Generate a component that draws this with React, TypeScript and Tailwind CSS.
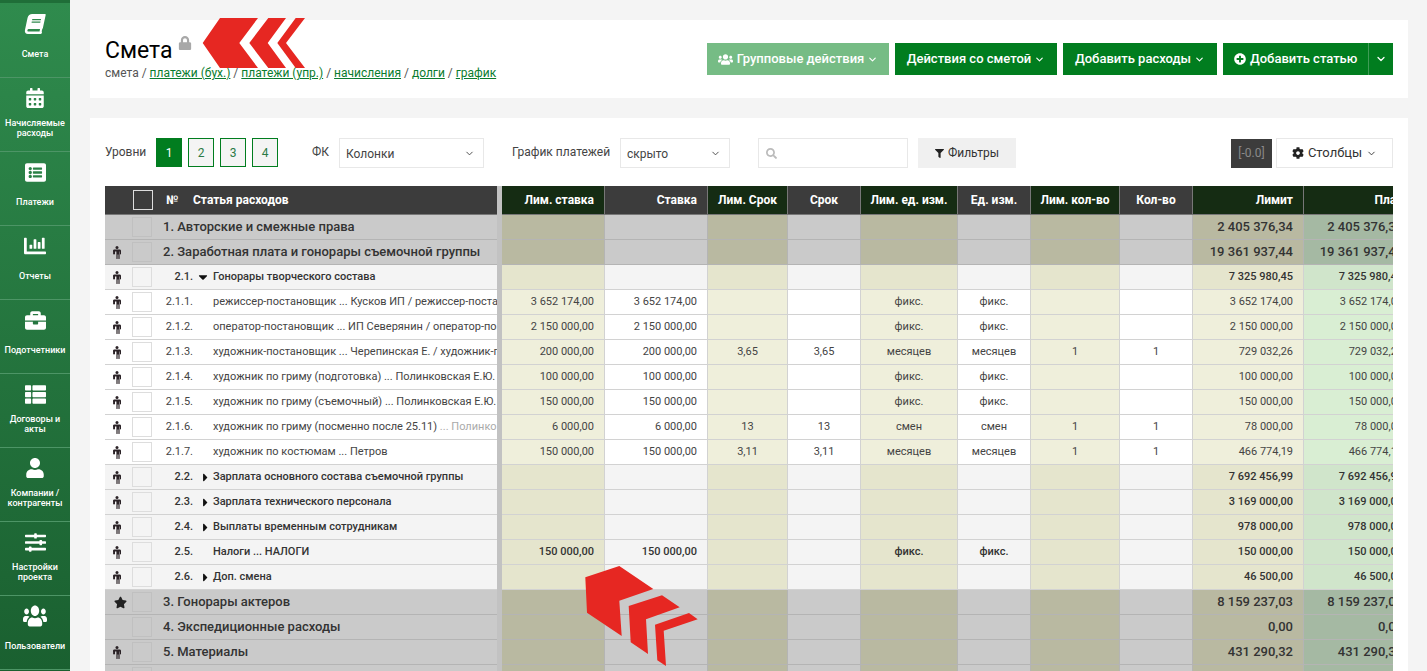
import {
  FaBook,
  FaBriefcase,
  FaCalendarAlt,
  FaChartBar,
  FaCog,
  FaFilter,
  FaListAlt,
  FaLock,
  FaPlusCircle,
  FaSearch,
  FaSlidersH,
  FaStar,
  FaThList,
  FaUser,
  FaUsers,
  FaCaretDown,
  FaCaretRight,
} from 'react-icons/fa';
import { ChevronDown } from 'lucide-react';
import type { ReactNode } from 'react';

const navItems: { icon: ReactNode; label: ReactNode }[] = [
  { icon: <FaBook className="text-[20px] -skew-x-12" />, label: 'Смета' },
  { icon: <FaCalendarAlt className="text-[20px]" />, label: <>Начисляемые<br />расходы</> },
  { icon: <FaListAlt className="text-[21px]" />, label: 'Платежи' },
  { icon: <FaChartBar className="text-[22px]" />, label: 'Отчеты' },
  { icon: <FaBriefcase className="text-[21px]" />, label: 'Подотчетники' },
  { icon: <FaThList className="text-[21px]" />, label: <>Договоры и<br />акты</> },
  { icon: <FaUser className="text-[20px]" />, label: <>Компании /<br />контрагенты</> },
  { icon: <FaSlidersH className="text-[21px]" />, label: <>Настройки<br />проекта</> },
  { icon: <FaUsers className="scale-y-125 text-[24px]" />, label: 'Пользователи' },
];

type Kind = 'group' | 'sub' | 'leaf';

interface Row {
  kind: Kind;
  num?: string;
  label?: ReactNode;
  mark?: 'male' | 'star';
  caret?: 'down' | 'right';
  cells?: string[];
}

const fix = (a: string, lim: string) => [a, a, '', '', 'фикс.', 'фикс.', '', '', lim, lim];
const mon = (a: string, n: string, unit: string, k: string, lim: string) => [a, a, n, n, unit, unit, k, k, lim, lim];
const empty = (lim: string) => ['', '', '', '', '', '', '', '', lim, lim];

const rows: Row[] = [
  { kind: 'group', label: '1. Авторские и смежные права', cells: empty('2 405 376,34') },
  { kind: 'group', mark: 'male', label: '2. Заработная плата и гонорары съемочной группы', cells: empty('19 361 937,44') },
  { kind: 'sub', mark: 'male', num: '2.1.', caret: 'down', label: 'Гонорары творческого состава', cells: empty('7 325 980,45') },
  { kind: 'leaf', mark: 'male', num: '2.1.1.', label: 'режиссер-постановщик ... Кусков ИП / режиссер-поста', cells: fix('3 652 174,00', '3 652 174,00') },
  { kind: 'leaf', mark: 'male', num: '2.1.2.', label: 'оператор-постановщик ... ИП Северянин / оператор-по', cells: fix('2 150 000,00', '2 150 000,00') },
  { kind: 'leaf', mark: 'male', num: '2.1.3.', label: 'художник-постановщик ... Черепинская Е. / художник-п', cells: mon('200 000,00', '3,65', 'месяцев', '1', '729 032,26') },
  { kind: 'leaf', mark: 'male', num: '2.1.4.', label: 'художник по гриму (подготовка) ... Полинковская Е.Ю.', cells: fix('100 000,00', '100 000,00') },
  { kind: 'leaf', mark: 'male', num: '2.1.5.', label: 'художник по гриму (съемочный) ... Полинковская Е.Ю.', cells: fix('150 000,00', '150 000,00') },
  {
    kind: 'leaf',
    mark: 'male',
    num: '2.1.6.',
    label: <>художник по гриму (посменно после 25.11) <span className="text-[#aaaaaa]">... Полинко</span></>,
    cells: mon('6 000,00', '13', 'смен', '1', '78 000,00'),
  },
  { kind: 'leaf', mark: 'male', num: '2.1.7.', label: 'художник по костюмам ... Петров', cells: mon('150 000,00', '3,11', 'месяцев', '1', '466 774,19') },
  { kind: 'sub', mark: 'male', num: '2.2.', caret: 'right', label: 'Зарплата основного состава съемочной группы', cells: empty('7 692 456,99') },
  { kind: 'sub', mark: 'male', num: '2.3.', caret: 'right', label: 'Зарплата технического персонала', cells: empty('3 169 000,00') },
  { kind: 'sub', mark: 'male', num: '2.4.', caret: 'right', label: 'Выплаты временным сотрудникам', cells: empty('978 000,00') },
  { kind: 'sub', mark: 'male', num: '2.5.', label: 'Налоги ... НАЛОГИ', cells: ['150 000,00', '150 000,00', '', '', 'фикс.', 'фикс.', '', '', '150 000,00', '150 000,00'] },
  { kind: 'sub', mark: 'male', num: '2.6.', caret: 'right', label: 'Доп. смена', cells: empty('46 500,00') },
  { kind: 'group', mark: 'star', label: '3. Гонорары актеров', cells: empty('8 159 237,03') },
  { kind: 'group', label: '4. Экспедиционные расходы', cells: empty('0,00') },
  { kind: 'group', mark: 'male', label: '5. Материалы', cells: empty('431 290,32') },
  { kind: 'group', cells: empty('') },
];

const columns = [
  { title: 'Лим. ставка', tone: 'lim', align: 'right', width: 'w-[103px]' },
  { title: 'Ставка', tone: 'base', align: 'right', width: 'w-[103px]' },
  { title: 'Лим. Срок', tone: 'lim', align: 'center', width: 'w-[80px]' },
  { title: 'Срок', tone: 'base', align: 'center', width: 'w-[73px]' },
  { title: 'Лим. ед. изм.', tone: 'lim', align: 'center', width: 'w-[97px]' },
  { title: 'Ед. изм.', tone: 'base', align: 'center', width: 'w-[73px]' },
  { title: 'Лим. кол-во', tone: 'lim', align: 'center', width: 'w-[89px]' },
  { title: 'Кол-во', tone: 'base', align: 'center', width: 'w-[73px]' },
  { title: 'Лимит', tone: 'lim', align: 'right', width: 'w-[111px]' },
  { title: 'План', tone: 'plan', align: 'right', width: 'w-[110px]' },
] as const;

const kindStyles = {
  group: {
    base: 'bg-[#cacaca]',
    lim: 'bg-[#b9b9a1]',
    plan: 'bg-[#a5b9a3]',
    line: 'border-[#b4b4b4]',
    text: 'text-[13px] font-medium text-[#333333]',
    box: 'border-[#c0c0c0]',
  },
  sub: {
    base: 'bg-[#f4f4f4]',
    lim: 'bg-[#e5e5cd]',
    plan: 'bg-[#d0e5cb]',
    line: 'border-[#d2d2d2]',
    text: 'text-[11px] font-medium text-[#333333]',
    box: 'border-[#dddddd]',
  },
  leaf: {
    base: 'bg-white',
    lim: 'bg-[#efefdb]',
    plan: 'bg-[#d9eed3]',
    line: 'border-[#d2d2d2]',
    text: 'text-[11px] text-[#444444]',
    box: 'border-[#dddddd] bg-white',
  },
};

function MaleIcon() {
  return (
    <svg viewBox="0 0 8 13" className="h-[13px] w-2 fill-[#2a2226]">
      <circle cx="4" cy="1.5" r="1.5" />
      <path d="M1.4 3.4h5.2c.8 0 1.4.6 1.4 1.4V8c0 .3-.2.5-.5.5S7 8.3 7 8V5.4h-.4v7c0 .3-.3.6-.6.6s-.6-.3-.6-.6V8.6h-.8v3.8c0 .3-.3.6-.6.6s-.6-.3-.6-.6v-7H2V8c0 .3-.2.5-.5.5S1 8.3 1 8V5.4H.9V8c0 .3-.2.5-.45.5S0 8.3 0 8V4.8c0-.8.6-1.4 1.4-1.4z" />
    </svg>
  );
}

function Btn({ children, light, width }: { children: ReactNode; light?: boolean; width: string }) {
  return (
    <button
      type="button"
      className={
        'flex h-8 items-center justify-center gap-[3px] text-[13px] font-medium text-white ' +
        width + ' ' +
        (light ? 'bg-[#76bc85]' : 'bg-[#017d1f]')
      }
    >
      {children}
    </button>
  );
}

function Select({ value, width }: { value: string; width: string }) {
  return (
    <div className={'flex h-[30px] items-center justify-between border border-[#e8e8e8] bg-white pl-[6px] pr-[8px] pt-px text-[12px] text-[#444444] ' + width}>
      <span>{value}</span>
      <ChevronDown size={11} strokeWidth={2} />
    </div>
  );
}

function Levels() {
  return (
    <div className="flex gap-[6px] self-start">
      {['1', '2', '3', '4'].map((n) => (
        <div
          key={n}
          className={
            'flex h-[29px] w-[26px] items-center justify-center border border-[#017d1f] text-[12px] ' +
            (n === '1' ? 'bg-[#017d1f] text-white' : 'bg-[#f4f4f4] text-[#2a7a45]')
          }
        >
          {n}
        </div>
      ))}
    </div>
  );
}

function TableRow({ row }: { row: Row }) {
  const s = kindStyles[row.kind];
  return (
    <tr className="h-[25px]">
      <td className={'border-b p-0 ' + s.base + ' ' + s.line}>
        <div className="flex h-[24px] items-center overflow-hidden whitespace-nowrap">
          <span className="mr-[3px] flex w-[24px] shrink-0 justify-center text-[#222222]">
            {row.mark === 'male' && <MaleIcon />}
            {row.mark === 'star' && <FaStar className="ml-[6px] text-[13px]" />}
          </span>
          <span className={'h-5 w-5 shrink-0 border ' + s.box} />
          {row.kind === 'group' ? (
            <span className={'ml-[11px] ' + s.text}>{row.label}</span>
          ) : (
            <>
              <span className={'w-[41px] shrink-0 text-right text-[11px] ' + (row.kind === 'sub' ? 'font-medium text-[#333333]' : 'text-[#444444]')}>
                {row.num}
              </span>
              <span className="flex w-[20px] shrink-0 justify-center text-[#111111]">
                {row.caret === 'down' && <FaCaretDown className="text-[14px]" />}
                {row.caret === 'right' && <FaCaretRight className="ml-[4px] text-[13px]" />}
              </span>
              <span className={s.text}>{row.label}</span>
            </>
          )}
        </div>
      </td>
      <td className="bg-[#c2c2c2] p-0" />
      {columns.map((col, i) => {
        const isSum = i >= 8;
        const size =
          row.kind === 'group' && isSum
            ? 'text-[13px] font-medium text-[#333333]'
            : row.kind === 'sub'
              ? 'text-[11px] font-medium text-[#333333]'
              : 'text-[11px] text-[#444444]';
        return (
          <td
            key={col.title}
            className={
              'overflow-hidden whitespace-nowrap border-b border-r p-0 ' +
              s[col.tone] + ' ' + s.line + ' ' + size + ' ' +
              (col.align === 'right' ? 'pr-[10px] text-right' : 'text-center')
            }
          >
            {row.cells?.[i]}
          </td>
        );
      })}
    </tr>
  );
}

export default function App() {
  return (
    <div className="relative flex h-screen overflow-hidden bg-[#f4f4f4] font-['Roboto',sans-serif]">
      <aside className="w-[70px] shrink-0 overflow-hidden border-t-[3px] border-[#1f6e38] bg-gradient-to-b from-[#2f8b4d] to-[#1a6030] pt-px">
        {navItems.map((item, i) => (
          <div key={i} className="h-[74px] border-b border-[#4d9566] pt-[9px] text-white">
            <div className="flex h-[22px] items-center justify-center">{item.icon}</div>
            <div className="mt-[7px] flex h-[24px] items-center justify-center text-center text-[9px] font-medium leading-[10px]">
              <span>{item.label}</span>
            </div>
          </div>
        ))}
      </aside>

      <main className="flex w-[1338px] shrink-0 flex-col gap-5 pl-5 pt-5">
        <section className="flex h-[78px] items-center justify-between bg-white px-[15px]">
          <div>
            <div className="flex text-[23px] leading-[28px] text-black">
              Смета
              <FaLock className="-mt-px ml-[5px] text-[14px] text-[#a8a8a8]" />
            </div>
            <div className="text-[12px] leading-[16px] text-[#555555]">
              смета /{' '}
              <a className="text-[#0a7c2e] underline">платежи (бух.)</a> /{' '}
              <a className="text-[#0a7c2e] underline">платежи (упр.)</a> /{' '}
              <a className="text-[#0a7c2e] underline">начисления</a> /{' '}
              <a className="text-[#0a7c2e] underline">долги</a> /{' '}
              <a className="text-[#0a7c2e] underline">график</a>
            </div>
          </div>
          <div className="flex gap-[6px]">
            <Btn light width="w-[182px]">
              <FaUsers className="mr-px text-[15px]" /> Групповые действия <ChevronDown size={11} strokeWidth={2.5} />
            </Btn>
            <Btn width="w-[162px]">
              Действия со сметой <ChevronDown size={11} strokeWidth={2.5} />
            </Btn>
            <Btn width="w-[154px]">
              Добавить расходы <ChevronDown size={11} strokeWidth={2.5} />
            </Btn>
            <div className="flex h-8 w-[170px] bg-[#017d1f] text-[13px] font-medium text-white">
              <div className="flex w-[146px] items-center gap-1 border-r border-[#3f9c56] pl-[11px]">
                <FaPlusCircle className="text-[12px]" /> Добавить статью
              </div>
              <div className="flex flex-1 items-center justify-center">
                <ChevronDown size={12} strokeWidth={2.5} />
              </div>
            </div>
          </div>
        </section>

        <section className="min-h-0 flex-1 bg-white px-[15px] pt-5">
          <div className="flex h-[30px] items-center text-[12px] text-[#444444]">
            <span className="w-[51px] pb-[2px]">Уровни</span>
            <Levels />
            <span className="ml-[34px] w-[27px] pb-[2px]">ФК</span>
            <Select value="Колонки" width="w-[145px]" />
            <span className="ml-[28px] w-[108px] pb-[2px]">График платежей</span>
            <Select value="скрыто" width="w-[110px]" />
            <div className="ml-[28px] flex h-[30px] w-[150px] items-center border border-[#e8e8e8] pl-[7px] text-[#bbbbbb]">
              <FaSearch className="text-[11px]" />
            </div>
            <div className="ml-[10px] flex h-[30px] w-[98px] items-center justify-center gap-1 bg-[#f0f0f0] text-[#333333]">
              <FaFilter className="text-[9px] text-[#222222]" /> Фильтры
            </div>
            <div className="ml-auto flex h-[29px] w-[41px] items-center justify-center bg-[#3c3c3c] text-[#8a8a8a]">[-0.0]</div>
            <div className="ml-[4px] flex h-[30px] w-[117px] items-center justify-center gap-1 border border-[#e8e8e8] text-[13px] text-[#333333]">
              <FaCog className="text-[12px] text-[#222222]" /> Столбцы <ChevronDown size={11} />
            </div>
          </div>

          <div className="mt-[18px] w-[1288px] overflow-hidden">
            <table className="w-[1309px] table-fixed border-separate border-spacing-0">
              <colgroup>
                <col className="w-[392px]" />
                <col className="w-[5px]" />
                {columns.map((c) => (
                  <col key={c.title} className={c.width} />
                ))}
              </colgroup>
              <thead>
                <tr className="h-[29px] text-[12px] font-bold text-white">
                  <th className="border-b border-[#777777] bg-[#3c3c3c] p-0 text-left font-bold">
                    <div className="flex items-center">
                      <span className="ml-[28px] h-5 w-5 border border-[#dddddd]" />
                      <span className="ml-[13px] w-[27px]">№</span>
                      <span>Статья расходов</span>
                    </div>
                  </th>
                  <th className="bg-[#c2c2c2] p-0" />
                  {columns.map((c) => (
                    <th
                      key={c.title}
                      className={
                        'overflow-hidden whitespace-nowrap border-b border-r border-[#777777] p-0 font-bold ' +
                        (c.tone === 'base' ? 'bg-[#3c3c3c] ' : 'bg-[#152c13] ') +
                        (c.align === 'right' ? 'pr-[10px] text-right' : 'text-center')
                      }
                    >
                      {c.title}
                    </th>
                  ))}
                </tr>
              </thead>
              <tbody>
                {rows.map((row, i) => (
                  <TableRow key={i} row={row} />
                ))}
              </tbody>
            </table>
          </div>
        </section>
      </main>

      {/* red markers that sit on top of the page */}
      <svg className="pointer-events-none absolute left-0 top-0 h-[671px] w-[1427px]" viewBox="0 0 1427 671">
        <g fill="#e62722">
          <polygon points="202.7,43 220,18 258,18 239.3,43 258,68 220,68" />
          <polygon points="249.3,43 268.3,18 286,18 267.7,43 286,68 268.3,68" />
          <polygon points="277.3,43 295.7,18 305,18 286,43 305,68 295.7,68" />
          <polygon points="585.3,577.3 619.3,566 653.3,589 619.3,600.7 621.7,636 587,612.7" />
          <polygon points="628.7,606 662,595.3 679.7,607.3 646,619.3 648,654 630.7,642.3" />
          <polygon points="655,624.7 689,613 697.7,619.3 663.7,630.7 666,666 657.3,660.3" />
        </g>
      </svg>
    </div>
  );
}
